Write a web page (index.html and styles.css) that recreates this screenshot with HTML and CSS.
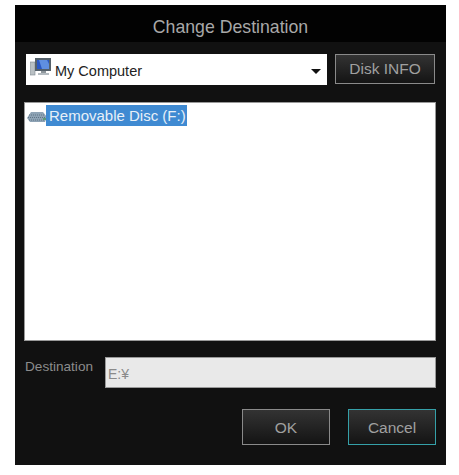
FILE: index.html
```html
<!DOCTYPE html>
<html>
<head>
	<meta charset="utf-8">
	<title>Change Destination</title>
	<link rel="stylesheet" href="styles.css">
</head>
<body>
	<div class="dialog">
		<div class="title_bar">Change Destination</div>
		<div class="content">
			<div class="drive_row">
				<div class="combo">
					<svg class="pc_icon" width="22" height="20" viewBox="0 0 22 20">
						<rect x="0" y="5" width="5" height="13" fill="#b9c0c4" stroke="#7d8890" stroke-width="0.6"/>
						<rect x="5" y="1" width="16" height="13" fill="#55616b"/>
						<rect x="7" y="3" width="12" height="9" fill="#2a58c4"/>
						<path d="M9 3h8l2 4v5H12z" fill="#5f8fe0"/>
						<rect x="11" y="14" width="5" height="2" fill="#8d969c"/>
						<rect x="8" y="16" width="11" height="2" fill="#b4bbc0"/>
					</svg>
					<span class="combo_text">My Computer</span>
					<span class="combo_arrow"></span>
				</div>
				<button class="btn btn_disk">Disk INFO</button>
			</div>
			<div class="file_list">
				<div class="file_row">
					<svg class="disc_icon" width="20" height="12" viewBox="0 0 20 12">
						<path d="M4 1h12l4 5-2 5H3L0 7z" fill="#8ea3b5"/>
						<path d="M2 4h15M1 6.500h17M2 9h15" stroke="#5f7485" stroke-width="1" stroke-dasharray="1 1"/>
						<rect x="16" y="7" width="3" height="2" fill="#5c9a7a"/>
					</svg>
					<span class="file_name">Removable Disc (F:)</span>
				</div>
			</div>
			<div class="dest_row">
				<label class="dest_label" for="dest">Destination</label>
				<input class="dest_input" id="dest" type="text" value="E:¥" disabled>
			</div>
			<div class="button_row">
				<button class="btn btn_main">OK</button>
				<button class="btn btn_main btn_focus">Cancel</button>
			</div>
		</div>
	</div>
</body>
</html>
```
FILE: styles.css
```css
html, body
{
	margin: 0;
	background-color: white;
}

.dialog
{
	width: 431px;
	height: 460px;
	margin-top: 5px;
	margin-left: 15px;
	background-color: #111;
	font-family: "Liberation Sans", Arial, sans-serif;
	display: flex;
	flex-direction: column;
}

.title_bar
{
	height: 37px;
	line-height: 44px;
	background-color: #020202;
	color: #a8a8a8;
	font-size: 17.700px;
	text-align: center;
}

.content
{
	padding: 12px 10px 0 9px;
	display: flex;
	flex-direction: column;
}

.drive_row
{
	display: flex;
	align-items: flex-start;
	margin-left: 2px;
}

.combo
{
	width: 301px;
	height: 31px;
	background-color: white;
	display: flex;
	align-items: center;
	position: relative;
}

.pc_icon
{
	margin-left: 4px;
	margin-top: -5px;
}

.combo_text
{
	margin-left: 3px;
	margin-top: 2px;
	font-size: 14.500px;
	color: #222;
}

.combo_arrow
{
	position: absolute;
	right: 6px;
	top: 15px;
	border-left: 5px solid transparent;
	border-right: 5px solid transparent;
	border-top: 5px solid #111;
}

.btn
{
	box-sizing: border-box;
	font-family: "Liberation Sans", Arial, sans-serif;
	color: #a0a0a0;
	border: 1px solid #8a8a8a;
	background: linear-gradient(#333, #141414);
	padding: 0;
}

.btn_disk
{
	width: 100px;
	height: 30px;
	margin-left: 8px;
	font-size: 15.500px;
}

.file_list
{
	box-sizing: border-box;
	height: 239px;
	margin-top: 17px;
	background-color: white;
	border: 1px solid #999;
}

.file_row
{
	display: flex;
	align-items: center;
	margin-top: 2px;
}

.disc_icon
{
	margin-left: 2px;
	margin-right: -1px;
	margin-top: 2px;
}

.file_name
{
	background-color: #3f8ad2;
	color: #e8f0f8;
	font-size: 15px;
	line-height: 21px;
	padding: 0 1px 0 3px;
}

.dest_row
{
	display: flex;
	align-items: flex-start;
	margin-top: 16px;
}

.dest_label
{
	width: 80px;
	margin-top: 1px;
	padding-left: 1px;
	color: #8c8c8c;
	font-size: 13.600px;
	line-height: 18px;
}

.dest_input
{
	box-sizing: border-box;
	width: 331px;
	height: 31px;
	padding: 3px 2px 0 2px;
	border: 1px solid #999;
	background-color: #e9e9e9;
	color: #8a8a8a;
	font-family: "Liberation Sans", Arial, sans-serif;
	font-size: 14px;
}

.button_row
{
	display: flex;
	justify-content: flex-end;
	gap: 18px;
	margin-top: 21px;
}

.btn_main
{
	width: 88px;
	height: 36px;
	padding-top: 2px;
	font-size: 15.500px;
}

.btn_focus
{
	border-color: #35a0a8;
}
```
